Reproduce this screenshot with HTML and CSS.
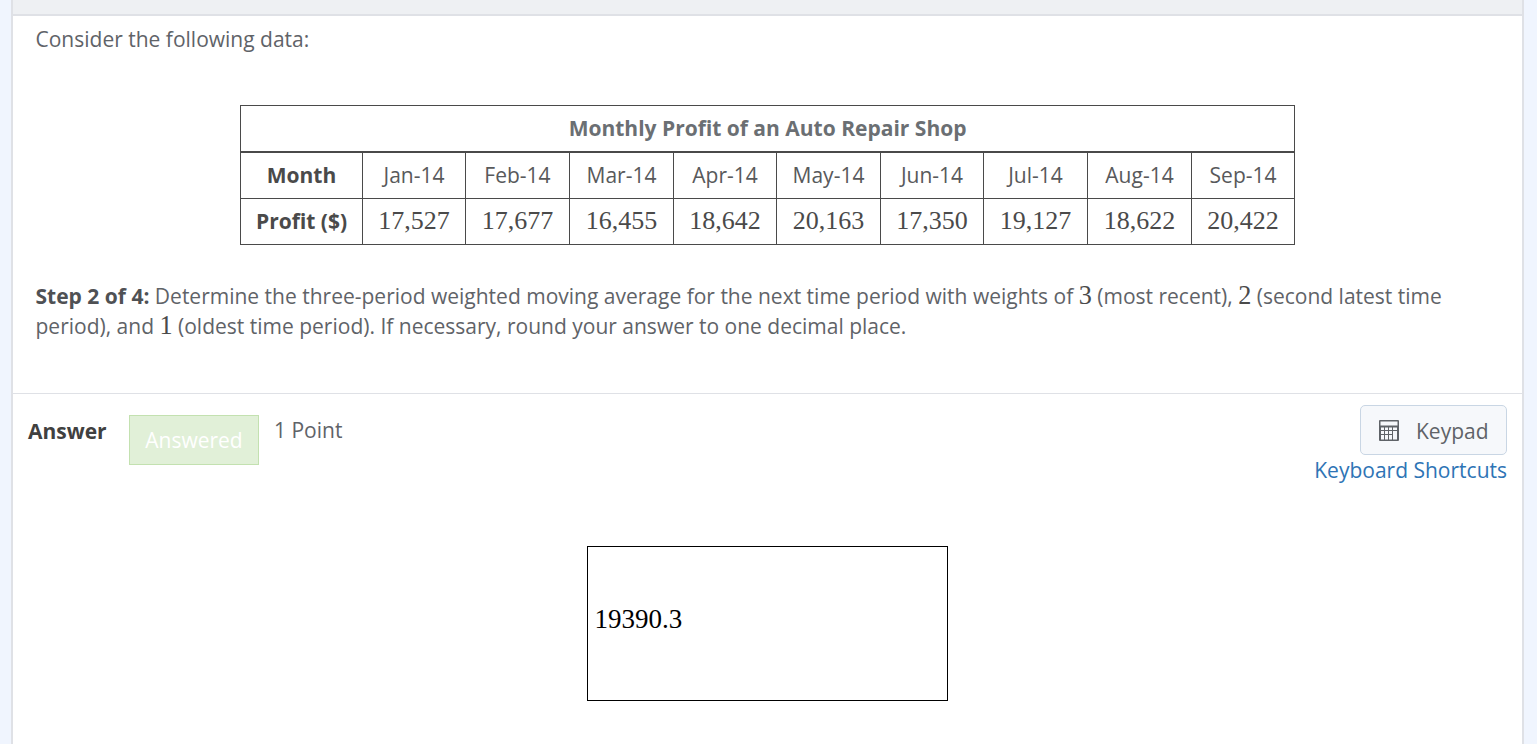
FILE: index.html
```html
<!DOCTYPE html>
<html lang="en">
<head>
<meta charset="utf-8">
<title>Question</title>
<link rel="stylesheet" href="styles.css">
</head>
<body>
<main class="card">
  <div class="topband"></div>
  <section class="question">
    <p class="intro">Consider the following data:</p>
    <table class="data">
      <colgroup>
        <col class="c-head"><col class="c1"><col class="c2"><col class="c2"><col class="c1"><col class="c2"><col class="c1"><col class="c2"><col class="c2"><col class="c1">
      </colgroup>
      <thead>
        <tr><th colspan="10" class="caption">Monthly Profit of an Auto Repair Shop</th></tr>
      </thead>
      <tbody>
        <tr class="months"><th>Month</th><td>Jan-14</td><td>Feb-14</td><td>Mar-14</td><td>Apr-14</td><td>May-14</td><td>Jun-14</td><td>Jul-14</td><td>Aug-14</td><td>Sep-14</td></tr>
        <tr class="profit"><th>Profit ($)</th><td>17,527</td><td>17,677</td><td>16,455</td><td>18,642</td><td>20,163</td><td>17,350</td><td>19,127</td><td>18,622</td><td>20,422</td></tr>
      </tbody>
    </table>
    <p class="step"><b>Step 2 of 4:</b> Determine the three-period weighted moving average for the next time period with weights of <span class="num">3</span> (most recent), <span class="num">2</span> (second latest time period), and <span class="num">1</span> (oldest time period). If necessary, round your answer to one decimal place.</p>
  </section>
  <section class="answer">
    <div class="answer-head">
      <div class="answer-left">
        <strong class="answer-label">Answer</strong>
        <span class="badge">Answered</span>
        <span class="points">1 Point</span>
      </div>
      <div class="answer-right">
        <button class="keypad" type="button">
          <svg class="calc" viewBox="0 0 20 21" width="20" height="21" aria-hidden="true">
            <path fill="#5f6368" fill-rule="evenodd" d="M1 0h18a1 1 0 0 1 1 1v19a1 1 0 0 1-1 1H1a1 1 0 0 1-1-1V1a1 1 0 0 1 1-1zM1.500 1.500v4h17v-4zM2 7.500v2.500h3V7.500zm4 0v2.500h3V7.500zm4 0v2.500h3V7.500zm4 0v2.500h4V7.500zM2 11v3h3v-3zm4 0v3h3v-3zm4 0v3h3v-3zm4 0v8.500h4V11zM2 15v4.500h3V15zm4 0v4.500h3V15zm4 0v4.500h3V15z"/>
          </svg>
          <span class="keypad-text">Keypad</span>
        </button>
        <a class="shortcuts" href="#">Keyboard Shortcuts</a>
      </div>
    </div>
    <div class="response">19390.3</div>
  </section>
</main>
</body>
</html>
```
FILE: styles.css
```css
* { box-sizing: border-box; }
html, body { margin: 0; height: 100%; overflow: hidden; }
body {
  background: #f0f5fe;
  padding: 0 13px 0 11px;
  font-family: "Open Sans", sans-serif;
  font-size: 21px;
  color: #5f6368;
}
.card {
  background: #fff;
  border-left: 2px solid #dfe1e6;
  border-right: 2px solid #dfe1e6;
  height: 744px;
  overflow: hidden;
}
.topband {
  height: 16px;
  background: #eef0f3;
  border-bottom: 2px solid #dfe1e6;
}
.question {
  padding: 8px 23px 0 22.5px;
  height: 378px;
  border-bottom: 1px solid #dfe1e6;
}
.intro { margin: 0; line-height: 30px; }
.data {
  border-collapse: collapse;
  table-layout: fixed;
  width: 1055px;
  margin: 51px 0 0 204.5px;
  color: #58595b;
  text-align: center;
}
.c-head { width: 122px; }
.c1 { width: 103px; }
.c2 { width: 104px; }
.data th, .data td { border: 1px solid #4a4a4a; padding: 0; font-size: 21px; height: 46px; }
.data th { color: #4a4a4a; font-weight: 700; }
.data .caption { color: #6b6f73; height: 46px; border-bottom-width: 2px; }
.months th, .months td { height: 47px; }
.profit th, .profit td { padding-bottom: 2px; }
.data .profit td { font-family: "Liberation Serif", serif; font-size: 26px; color: #4a4a4a; }
.step { margin: 36px 0 0; line-height: 30px; }
.step b { font-weight: 700; color: #4f5154; }
.num { font-family: "Liberation Serif", serif; font-size: 26.25px; line-height: 1; color: #4a4a4a; }
.answer { padding: 11px 15px 0; }
.answer-head { display: flex; justify-content: space-between; align-items: flex-start; }
.answer-left { display: flex; align-items: flex-start; padding: 10px 0 0; }
.answer-label { color: #404040; width: 101px; line-height: 32px; }
.badge {
  display: block;
  width: 130px;
  height: 50px;
  background: #e1f0d8;
  border: 1px solid #c3e1b0;
  color: #fff;
  text-align: center;
  line-height: 47px;
  padding-top: 1px;
}
.points { margin-left: 15px; line-height: 31px; }
.answer-right { display: flex; flex-direction: column; align-items: flex-end; }
.keypad {
  display: flex;
  align-items: center;
  gap: 17px;
  width: 147px;
  height: 50px;
  padding: 0 0 0 18px;
  background: #f6f8fb;
  border: 1px solid #c9d6e4;
  border-radius: 5px;
  font: inherit;
  color: #5f6368;
}
.keypad-text { padding-top: 2px; }
.shortcuts { color: #2e74b5; text-decoration: none; line-height: 30px; }
.response {
  width: 361px;
  height: 155px;
  margin: 61px 0 0 559px;
  border: 1px solid #000;
  background: #fff;
  color: #000;
  font-family: "Liberation Serif", serif;
  font-size: 27px;
  line-height: 30px;
  padding: 57px 0 0 6.5px;
}
```
